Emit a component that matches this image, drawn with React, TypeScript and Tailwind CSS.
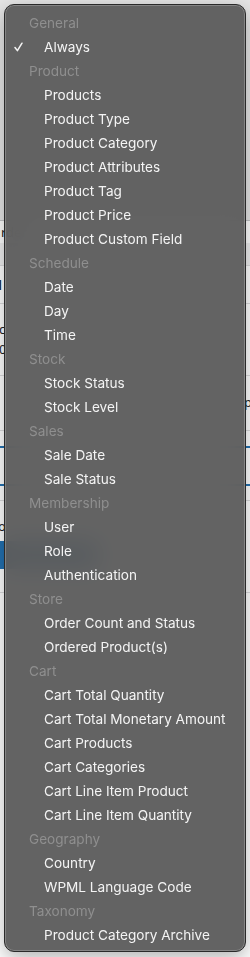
const groups: { title: string; items: string[] }[] = [
  { title: "General", items: ["Always"] },
  {
    title: "Product",
    items: [
      "Products",
      "Product Type",
      "Product Category",
      "Product Attributes",
      "Product Tag",
      "Product Price",
      "Product Custom Field",
    ],
  },
  { title: "Schedule", items: ["Date", "Day", "Time"] },
  { title: "Stock", items: ["Stock Status", "Stock Level"] },
  { title: "Sales", items: ["Sale Date", "Sale Status"] },
  { title: "Membership", items: ["User", "Role", "Authentication"] },
  { title: "Store", items: ["Order Count and Status", "Ordered Product(s)"] },
  {
    title: "Cart",
    items: [
      "Cart Total Quantity",
      "Cart Total Monetary Amount",
      "Cart Products",
      "Cart Categories",
      "Cart Line Item Product",
      "Cart Line Item Quantity",
    ],
  },
  { title: "Geography", items: ["Country", "WPML Language Code"] },
  { title: "Taxonomy", items: ["Product Category Archive"] },
];

const Page = () => (
  <div className="flex flex-col w-[250px] h-[957px] bg-[#f0f0f1] text-[13px] text-[#1d2327]">
    <div className="h-[220px] bg-[#e6e6e6]" />
    <div className="h-[23px] border-t border-[#c3c4c7] bg-white pl-[1px] leading-[23px]">rder</div>
    <div className="h-[22px] bg-[#f0f0f1]" />
    <div className="h-[38px] border-t border-[#dcdcde] bg-white font-bold leading-[38px] -ml-[2px]">l</div>
    <div className="h-[72px] border-t border-[#dcdcde] bg-white flex flex-col justify-center -ml-[1px]">
      <span>c</span>
      <span>0</span>
    </div>
    <div className="h-[55px] border-t border-[#dcdcde] bg-white flex justify-end items-center">
      <span className="mr-[-2px]">p</span>
    </div>
    <div className="h-[70px] border-t border-[#dcdcde] bg-white flex flex-col justify-center px-0">
      <div className="h-[40px] border-y-2 border-[#2271b1]" />
    </div>
    <div className="h-[92px] border-t border-[#dcdcde] bg-white flex flex-col">
      <div className="h-[40px] leading-[50px] -ml-[2px]">o</div>
      <div className="w-[100px] h-[28px] bg-[#2271b1] rounded-[3px] -ml-[2px]" />
    </div>
    <div className="flex-1 border-t border-[#dcdcde] bg-white" />
  </div>
);

const App = () => {
  return (
    <div className="relative w-[250px] h-[957px] overflow-hidden">
      <Page />
      <div
        className="absolute left-[4px] top-[4px] w-[242px] h-[948px] rounded-[10px] border border-[#2a2a2a] bg-[#5b5b5b]/95 backdrop-blur-md shadow-[inset_0_0_0_1px_rgba(255,255,255,0.22),0_6px_20px_rgba(0,0,0,0.3)] pt-[6px] pb-[4px]"
        style={{ fontFamily: "Inter, 'Noto Sans', sans-serif" }}
      >
        {groups.map((g) => (
          <div key={g.title}>
            <div className="h-[24px] pl-[24px] flex items-center text-[13.6px] text-[#8f8f8f]">
              {g.title}
            </div>
            {g.items.map((item) => (
              <div
                key={item}
                className="relative h-[24px] pl-[39px] flex items-center text-[13.6px] text-[#f4f4f4] whitespace-nowrap"
              >
                {item === "Always" && (
                  <svg
                    className="absolute left-[9px] top-[7px]"
                    width="9"
                    height="10"
                    viewBox="0 0 9 10"
                    fill="none"
                  >
                    <path
                      d="M1 5.5 L3.4 8.6 L8 1.2"
                      stroke="#f4f4f4"
                      strokeWidth="1.5"
                      strokeLinecap="round"
                      strokeLinejoin="round"
                    />
                  </svg>
                )}
                {item}
              </div>
            ))}
          </div>
        ))}
      </div>
    </div>
  );
};

export default App;
